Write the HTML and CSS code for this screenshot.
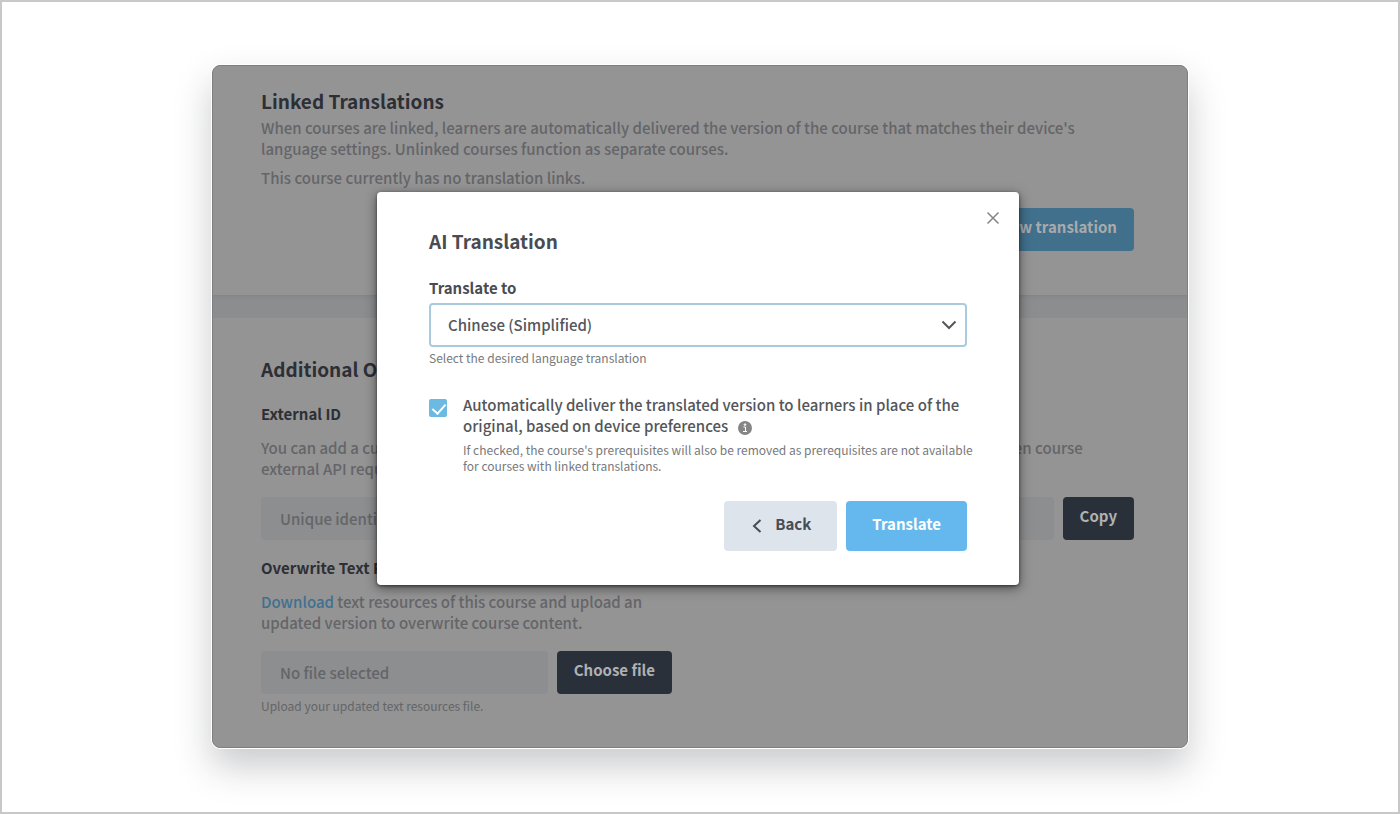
FILE: index.html
```html
<!DOCTYPE html>
<html lang="en">
<head>
<meta charset="utf-8">
<meta name="viewport" content="width=device-width, initial-scale=1">
<title>AI Translation</title>
<link rel="stylesheet" href="styles.css">
</head>

<body>
<div class="page">
	<div class="screen">
		<main class="settings">
			<section class="section section-links">
				<h2>Linked Translations</h2>
				<p>When courses are linked, learners are automatically delivered the version of the course that matches their device's language settings. Unlinked courses function as separate courses.</p>
				<p class="note">This course currently has no translation links.</p>
				<div class="actions">
					<button type="button" class="btn btn-blue">New translation</button>
				</div>
			</section>

			<section class="section section-options">
				<h2>Additional Options</h2>
				<h3><label for="external_id">External ID</label></h3>
				<p>You can add a custom ID to identify this course in your own learning system, and use it as the identifier when course external API requests are made.</p>
				<div class="field-row">
					<input type="text" id="external_id" class="field" placeholder="Unique identifier">
					<button type="button" class="btn btn-dark">Copy</button>
				</div>

				<div class="upload">
					<h3><label for="resource_file">Overwrite Text Resources</label></h3>
					<p><a href="#">Download</a> text resources of this course and upload an updated version to overwrite course content.</p>
					<div class="field-row">
						<input type="text" id="resource_file" class="field" value="No file selected" readonly>
						<button type="button" class="btn btn-dark">Choose file</button>
					</div>
					<p class="help">Upload your updated text resources file.</p>
				</div>
			</section>
		</main>

		<form class="modal" role="dialog" aria-labelledby="modal_title">
			<button type="button" class="modal-close" aria-label="Close">
				<svg width="14" height="14" viewBox="0 0 14 14"><path d="M1.5 1.5l11 11M12.5 1.5l-11 11"/></svg>
			</button>
			<h2 id="modal_title">AI Translation</h2>

			<label class="modal-label" for="language">Translate to</label>
			<div class="select">
				<select id="language">
					<option>Chinese (Simplified)</option>
				</select>
				<svg width="16" height="10" viewBox="0 0 16 10"><path d="M1.5 1.5L8 8l6.500-6.500"/></svg>
			</div>
			<p class="help">Select the desired language translation</p>

			<div class="check-row">
				<input type="checkbox" id="auto_deliver" checked>
				<div>
					<label for="auto_deliver">Automatically deliver the translated version to learners in place of the original, based on device preferences</label>
					<svg class="info" width="14" height="14" viewBox="0 0 14 14"><circle cx="7" cy="7" r="7"/><path d="M5.500 6h2v4.500M5 10.500h4M6.200 3h1.600v1.200H6.200z"/></svg>
					<p class="help">If checked, the course's prerequisites will also be removed as prerequisites are not available for courses with linked translations.</p>
				</div>
			</div>

			<div class="modal-actions">
				<button type="button" class="btn btn-back">
					<svg width="10" height="14" viewBox="0 0 10 14"><path d="M8.500 1L2 7l6.500 6"/></svg>
					Back
				</button>
				<button type="submit" class="btn btn-translate">Translate</button>
			</div>
		</form>
	</div>
</div>
</body>
</html>
```

FILE: styles.css
```css
* { box-sizing: border-box; }
body, h2, h3, p { margin: 0; }
body, button, input, select { font: 500 15px/21px "Noto Sans CJK SC", "Noto Sans", sans-serif; }
button { cursor: pointer; }
svg { fill: none; stroke: currentColor; stroke-width: 2; }

.page { min-height: 100vh; padding: 63px 16px; border: 2px solid #c8c8c9; background: #fff; }
.screen { position: relative; max-width: 976px; margin: 0 auto; }

/* dimmed settings page */
.settings {
	overflow: hidden;
	border: 1px solid #7d7e7e;
	border-radius: 8px;
	background: #8b8d8f;
	color: #646568;
	box-shadow: 0 0 0 1px #fff, 0 18px 36px rgba(40, 42, 50, .25);
}
.section { padding: 21px 53px 44px 48px; background: #949494; }
.section-links { margin-bottom: 23px; box-shadow: 0 1px 3px #7f8183; }
.section-options { padding-top: 37px; padding-bottom: 33px; }
h2 { font-size: 19px; line-height: 28px; font-weight: 700; }
h3 { font-size: 15px; line-height: 22px; font-weight: 700; margin-bottom: 12px; }
.settings h2, .settings h3 { color: #2d2f35; }
.section-links h2 { margin-bottom: 2px; }
.section-options h2 { margin-bottom: 20px; }
.note { margin-top: 8px; }
.settings a { color: #40708f; text-decoration: none; }
.actions { display: flex; justify-content: flex-end; margin-top: 20px; }

.field-row { display: flex; gap: 9px; margin-top: 18px; }
.field {
	flex: 1;
	min-width: 0;
	height: 43px;
	padding: 0 19px 1px;
	border: 0;
	border-radius: 4px;
	background: #8c8e90;
	color: #646568;
}
.field::placeholder { color: #646568; opacity: 1; }
.help { font-size: 12px; line-height: 16px; font-weight: 400; margin-top: 4px; }
.upload { max-width: 411px; margin-top: 17px; }

.btn {
	height: 43px;
	padding: 0 17px 7px;
	border: 0;
	border-radius: 4px;
	font-weight: 700;
}
.btn-blue { background: #41708d; color: #a9aaab; }
.btn-dark { background: #2a303a; color: #b0b1b3; }

/* translation dialog */
.modal {
	position: absolute;
	top: 127px;
	left: 0;
	right: 4px;
	width: 642px;
	max-width: 100%;
	margin: 0 auto;
	padding: 35px 52px 34px;
	border-radius: 4px;
	background: #fff;
	color: #54565a;
	box-shadow: 0 3px 12px rgba(0, 0, 0, .5), 0 1px 3px rgba(0, 0, 0, .5);
}
.modal h2 { color: #484c53; margin-bottom: 22px; }
.modal-close {
	position: absolute;
	top: 15px;
	right: 15px;
	display: flex;
	padding: 4px;
	border: 0;
	background: none;
	color: #858585;
}
.modal-close svg { stroke-width: 1.500; }
.modal-label { display: block; line-height: 22px; margin-bottom: 4px; font-weight: 700; color: #484c53; }
.select { position: relative; }
.select select {
	display: block;
	width: 100%;
	height: 44px;
	padding: 0 40px 2px 17px;
	border: 2px solid #a9cbdd;
	border-radius: 4px;
	background: #fff;
	color: #54565a;
	appearance: none;
}
.select svg { position: absolute; top: 17px; right: 10px; pointer-events: none; }
.select + .help { margin-top: 3px; }
.modal .help { color: #77797d; }

/* the fine print runs a little past the select */
.check-row { display: grid; grid-template-columns: 18px 1fr; gap: 16px; margin: 28px -16px 0 0; }
.check-row .help { margin-top: 6px; }
.check-row input {
	appearance: none;
	width: 18px;
	height: 18px;
	margin: 5px 0 0;
	border-radius: 2px;
	background: #6cb9e2;
}
.check-row input:checked::before {
	content: "";
	display: block;
	width: 6px;
	height: 11px;
	margin: 2px 0 0 6px;
	border: solid #fff;
	border-width: 0 2px 2px 0;
	transform: rotate(42deg);
}
.info { margin-left: 6px; vertical-align: -3px; stroke: none; }
.info circle { fill: #858585; }
.info path { stroke: #fff; stroke-width: 1; }

.modal-actions { display: flex; justify-content: flex-end; gap: 9px; margin-top: 27px; }
.modal-actions .btn { height: 50px; padding: 0 26px 5px; }
.modal-actions .btn-back { display: flex; align-items: center; gap: 13px; padding-left: 28px; background: #dde4ec; color: #484c53; }
.btn-back svg { margin-top: 4px; }
.btn-translate { background: #64b8ed; color: #fff; }
```
